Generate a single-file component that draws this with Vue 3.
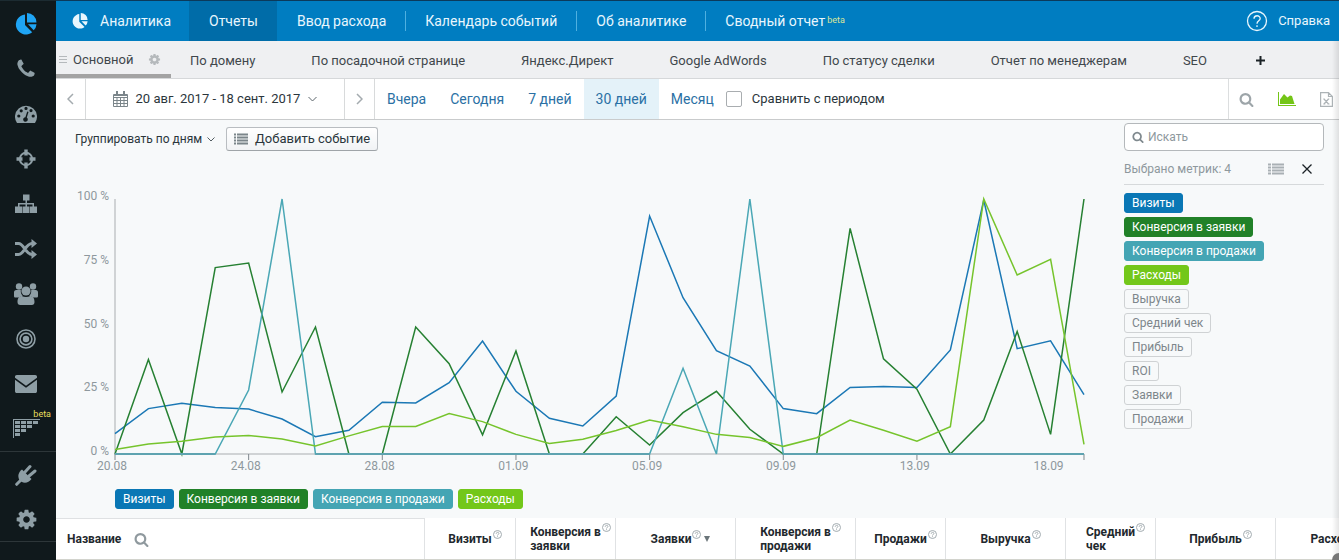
<script setup>
import { ref } from 'vue'

const cogPath = 'M1152 896q0-106-75-181t-181-75-181 75-75 181 75 181 181 75 181-75 75-181zm512-109v222q0 12-8 23t-20 13l-185 28q-19 54-39 91 35 50 107 138 10 12 10 25t-9 23q-27 37-99 108t-94 71q-12 0-26-9l-138-108q-44 23-91 38-16 136-29 186-7 28-36 28h-222q-14 0-24.5-8.5t-11.5-21.5l-28-184q-49-16-90-37l-141 107q-10 9-25 9-14 0-25-11-126-114-165-168-7-10-7-23 0-12 8-23 15-21 51-66.5t54-70.5q-27-50-41-99l-183-27q-13-2-21-12.5t-8-23.5v-222q0-12 8-23t19-13l186-28q14-46 39-92-40-57-107-138-10-12-10-24 0-10 9-23 26-36 98.5-107.5t94.5-71.5q13 0 26 10l138 107q44-23 91-38 16-136 29-186 7-28 36-28h222q14 0 24.5 8.5t11.5 21.5l28 184q49 16 90 37l142-107q9-9 24-9 13 0 25 10 129 119 165 170 7 8 7 22 0 12-8 23-15 21-51 66.5t-54 70.5q26 50 41 98l183 28q13 2 21 12.5t8 23.5z'
const searchPath = 'M1216 832q0-185-131.5-316.5t-316.5-131.5-316.5 131.5-131.5 316.5 131.5 316.5 316.5 131.5 316.5-131.5 131.5-316.5zm512 832q0 52-38 90t-90 38q-54 0-90-38l-343-342q-179 124-399 124-143 0-273.5-55.5t-225-150-150-225-55.5-273.5 55.5-273.5 150-225 225-150 273.5-55.5 273.5 55.5 225 150 150 225 55.5 273.5q0 220-124 399l343 343q37 37 37 90z'
const phonePath = 'M1600 1240q0 27-10 70.5t-21 68.5q-21 50-122 106-94 51-186 51-27 0-53-3.5t-57.5-12.5-47-14.5-55.5-20.5-49-18q-98-35-175-83-127-79-264-216t-216-264q-48-77-83-175-3-9-18-49t-20.5-55.5-14.5-47-12.5-57.5-3.5-53q0-92 51-186 56-101 106-122 25-11 68.5-21t70.5-10q14 0 21 3 18 6 53 76 11 19 30 54t35 63.5 31 53.5q3 4 17.5 25t21.5 35.5 7 28.5q0 20-28.5 50t-62 55-62 53-28.5 46q0 9 5 22.5t8.5 20.5 14 24 11.5 19q76 137 174 235t235 174q2 1 19 11.5t24 14 20.5 8.5 22.5 5q18 0 46-28.5t53-62 55-62 50-28.5q14 0 28.5 7t35.5 21.5 25 17.5q25 15 53.5 31t63.5 35 54 30q70 35 76 53 3 7 3 21z'

const menu = [
  { id: 'pie', name: 'Аналитика' },
  { id: 'phone', name: 'Звонки' },
  { id: 'gauge', name: 'Панель' },
  { id: 'aim', name: 'Цели' },
  { id: 'tree', name: 'Структура' },
  { id: 'shuffle', name: 'Сплит-тесты' },
  { id: 'users', name: 'Клиенты' },
  { id: 'target', name: 'Таргетинг' },
  { id: 'mail', name: 'Почта' },
  { id: 'grid', name: 'Когорты', beta: true },
  { id: 'plug', name: 'Интеграции', line: true },
  { id: 'cog', name: 'Настройки' },
]

const sections = [
  { name: 'Отчеты', active: true },
  { name: 'Ввод расхода' },
  { name: 'Календарь событий', line: true },
  { name: 'Об аналитике', line: true },
  { name: 'Сводный отчет', line: true, beta: true },
]

const reports = ['По домену', 'По посадочной странице', 'Яндекс.Директ', 'Google AdWords', 'По статусу сделки', 'Отчет по менеджерам', 'SEO']
const periods = ['Вчера', 'Сегодня', '7 дней', '30 дней', 'Месяц']
const period = ref('30 дней')

const series = [
  { name: 'Визиты', tone: 'blue', values: [8, 17.8, 19.9, 18.2, 17.6, 13.7, 6.8, 9.3, 20.3, 20, 28, 44.3, 24.6, 14, 11, 22.7, 93.3, 61.3, 40.5, 34.5, 17.8, 15.8, 26.1, 26.5, 26.1, 40.8, 99.6, 41.3, 44.4, 23.3] },
  { name: 'Конверсия в заявки', tone: 'green', values: [0, 37.1, 0, 73.1, 74.9, 24.3, 49.8, 0, 0, 49.8, 35.4, 7.5, 40.4, 0, 0, 14.6, 3.5, 16.2, 24.6, 9.7, 0, 0, 88.5, 37.3, 25.4, 0, 13.3, 48, 7.7, 100] },
  { name: 'Конверсия в продажи', tone: 'teal', values: [0, 0, 0, 0, 25.1, 100, 0, 0, 0, 0, 0, 0, 0, 0, 0, 0, 0, 33.6, 0, 100, 0, 0, 0, 0, 0, 0, 0, 0, 0, 0] },
  { name: 'Расходы', tone: 'lime', values: [1.8, 3.9, 5, 6.7, 7.3, 5.9, 3.1, 7.1, 10.8, 10.8, 15.9, 12.7, 7.7, 4.1, 5.8, 9.2, 13.3, 10.7, 7.7, 6.5, 3, 6.4, 13.3, 9.3, 5, 10.7, 100, 70.2, 76.3, 3.8] },
]
const idleMetrics = ['Выручка', 'Средний чек', 'Прибыль', 'ROI', 'Заявки', 'Продажи']

const days = 29
const points = (values) => values.map((v, i) => `${((i / days) * 1000).toFixed(2)},${(255 - v * 2.55).toFixed(2)}`).join(' ')
const levels = [100, 75, 50, 25, 0]
const dates = [
  { day: 0, text: '20.08' }, { day: 4, text: '24.08' }, { day: 8, text: '28.08' }, { day: 12, text: '01.09' },
  { day: 16, text: '05.09' }, { day: 20, text: '09.09' }, { day: 24, text: '13.09' }, { day: 28, text: '18.09' },
]
const ticks = [0, 4, 8, 12, 16, 20, 24, 29]

const columns = [
  { name: 'Визиты', size: 'w91' },
  { name: 'Конверсия в', second: 'заявки', size: 'w100' },
  { name: 'Заявки', size: 'w120', sorted: true },
  { name: 'Конверсия в', second: 'продажи', size: 'w120' },
  { name: 'Продажи', size: 'w90' },
  { name: 'Выручка', size: 'w120' },
  { name: 'Средний', second: 'чек', size: 'w90' },
  { name: 'Прибыль', size: 'w120' },
  { name: 'Расходы', size: 'w120' },
]
</script>

<template>
  <div class="page">
    <aside class="rail">
      <a v-for="m in menu" :key="m.id" href="#" class="rail-item" :class="{ ruled: m.line, current: m.id === 'pie' }" :aria-label="m.name">
        <svg v-if="m.id === 'pie'" width="22" height="22" viewBox="0 0 22 22">
          <path d="M10 1.500V12l7.200 7.200A10 10 0 1 1 10 1.500z" />
          <path d="M12 0a9.500 9.500 0 0 1 9.500 9.500H12z" />
          <path d="M13 11.300h8.500a9.500 9.500 0 0 1-2.800 6z" />
        </svg>
        <svg v-else-if="m.id === 'phone'" width="22" height="22" viewBox="0 0 1792 1792"><path :d="phonePath" /></svg>
        <svg v-else-if="m.id === 'gauge'" width="22" height="20" viewBox="0 0 22 20">
          <path fill-rule="evenodd" d="M2 19A11 11 0 1 1 20 19zM2.200 12a1.600 1.600 0 1 0 3.200 0a1.600 1.600 0 1 0-3.200 0zM4.600 6.800a1.600 1.600 0 1 0 3.200 0a1.600 1.600 0 1 0-3.200 0zM9.400 4.400a1.600 1.600 0 1 0 3.200 0a1.600 1.600 0 1 0-3.200 0zM14.400 6.600a1.600 1.600 0 1 0 3.200 0a1.600 1.600 0 1 0-3.200 0zM16.600 12a1.600 1.600 0 1 0 3.200 0a1.600 1.600 0 1 0-3.200 0zM12.200 7.500l-1.800 5.700a2.300 2.300 0 1 0 1.400.4l1.700-5.700z" />
        </svg>
        <svg v-else-if="m.id === 'aim'" width="20" height="20" viewBox="0 0 20 20">
          <circle cx="10" cy="10" r="6.200" class="stroke" stroke-width="2" />
          <path d="M8.300.5h3.400v6H8.300zM8.300 13.500h3.400v6H8.300zM.5 8.300h6v3.400h-6zM13.500 8.300h6v3.400h-6z" />
        </svg>
        <svg v-else-if="m.id === 'tree'" width="22" height="20" viewBox="0 0 22 20">
          <path d="M8 .5h6.500v6H12V9h7v3.500h3v6.500h-7v-6.500h2.500V10.500H12v2h2.500v6.500h-7v-6.500H10.500v-2H4.500v2H7v6.500H0v-6.500h3V9h7.500V6.500H8z" />
        </svg>
        <svg v-else-if="m.id === 'shuffle'" width="22" height="20" viewBox="0 0 22 20">
          <path class="stroke" stroke-width="3" d="M0 4.500h3.500C9 4.500 10.500 15.500 17 15.500h.5M0 15.500h3.500C9 15.500 10.500 4.500 17 4.500h.5" />
          <path d="M16.500 0l5.500 4.500-5.500 4.500zM16.500 11l5.500 4.500-5.500 4.500z" />
        </svg>
        <svg v-else-if="m.id === 'users'" width="24" height="22" viewBox="0 0 24 22">
          <circle cx="5" cy="3.500" r="3.200" /><circle cx="19" cy="3.500" r="3.200" />
          <path d="M0 13V9.500C0 8 .8 7 2.300 7h4.500c-.3 3 .6 4.600 2 5.800-1.400 0-2.600.8-3.300 1.700H1.500C.6 14.500 0 14 0 13zM24 13V9.500C24 8 23.200 7 21.700 7h-4.500c.3 3-.6 4.600-2 5.800 1.400 0 2.600.8 3.300 1.700h4c.9 0 1.500-.5 1.500-1.500z" />
          <circle cx="12" cy="8" r="4.600" />
          <path d="M3.500 19c0-3.500 1.500-6 4.300-6 2.500 1.400 5.900 1.400 8.400 0 2.800 0 4.300 2.500 4.300 6 0 2-1 3-2.700 3H6.200c-1.700 0-2.700-1-2.700-3z" />
        </svg>
        <svg v-else-if="m.id === 'target'" width="20" height="20" viewBox="0 0 20 20">
          <circle cx="10" cy="10" r="9" class="stroke" stroke-width="1.600" />
          <circle cx="10" cy="10" r="5.900" class="stroke" stroke-width="1.600" />
          <circle cx="10" cy="10" r="3.200" />
        </svg>
        <svg v-else-if="m.id === 'mail'" width="22" height="18" viewBox="0 0 22 18">
          <path d="M1.800 0h18.400C21.300 0 22 .7 22 1.800v1L11 10.800 0 2.800v-1C0 .7.700 0 1.800 0zM0 4.800l11 8 11-8v11.400c0 1.100-.7 1.800-1.800 1.800H1.800C.7 18 0 17.300 0 16.200z" />
        </svg>
        <svg v-else-if="m.id === 'grid'" width="27" height="19" viewBox="0 0 27 19">
          <path d="M0 0h27v1H1v18H0z" />
          <path d="M2 2h5v3H2zM8 2h5v3H8zM14 2h5v3h-5zM20 2h5v3h-5zM2 6h5v3H2zM8 6h5v3H8zM14 6h5v3h-5zM2 10h5v3H2zM8 10h5v3H8zM2 14h5v3H2z" />
        </svg>
        <svg v-else-if="m.id === 'plug'" width="22" height="22" viewBox="0 0 22 22">
          <path d="M7 5.500l9.500 9.500c-2.600 3.600-6.600 4.600-10 2.800L4.200 15.500C2.400 12.100 3.400 8.100 7 5.500z" />
          <path class="stroke" stroke-width="3" stroke-linecap="round" d="M10 8l5-5.500M14 12l6-5M1.700 20.300l4.500-4.500" />
        </svg>
        <svg v-else width="23" height="23" viewBox="0 0 1792 1792"><path :d="cogPath" /></svg>
        <span v-if="m.beta" class="rail-beta">beta</span>
      </a>
    </aside>

    <div class="content">
      <header class="top">
        <a href="#" class="brand">
          <svg width="16" height="16" viewBox="0 0 22 22">
            <path d="M10 1.500V12l7.200 7.200A10 10 0 1 1 10 1.500z" />
            <path d="M12 0a9.500 9.500 0 0 1 9.500 9.500H12z" />
            <path d="M13 11.300h8.500a9.500 9.500 0 0 1-2.800 6z" />
          </svg>
          Аналитика
        </a>
        <nav class="sections">
          <a v-for="s in sections" :key="s.name" href="#" :class="{ active: s.active, line: s.line }">{{ s.name }}<span v-if="s.beta" class="beta">beta</span></a>
        </nav>
        <a href="#" class="help">
          <svg width="22" height="22" viewBox="0 0 22 22">
            <circle cx="11" cy="11" r="9.500" />
            <path d="M8 8.800c0-4 6.200-4 6.200-.3 0 2.400-3.200 2.300-3.200 5.200M11 15.300v1.700" />
          </svg>
          Справка
        </a>
      </header>

      <nav class="tabs">
        <a href="#" class="tab-main">
          <svg width="8" height="7" viewBox="0 0 8 7"><path d="M0 .5h8M0 3.500h8M0 6.500h8" /></svg>
          <span>Основной</span>
          <svg class="tab-cog" width="13" height="13" viewBox="0 0 1792 1792"><path :d="cogPath" /></svg>
        </a>
        <a v-for="r in reports" :key="r" href="#" class="tab">{{ r }}</a>
        <button class="add" aria-label="Добавить отчет"><svg width="9" height="9" viewBox="0 0 9 9"><path d="M4.500 0v9M0 4.500h9" /></svg></button>
      </nav>

      <div class="bar">
        <button class="step" aria-label="Назад"><svg width="7" height="12" viewBox="0 0 7 12"><path d="M6 1L1 6l5 5" /></svg></button>
        <button class="range">
          <svg class="calendar" width="15" height="16" viewBox="0 0 15 16">
            <path d="M.5 3.500h14v12H.5zM.5 6.500h14M.5 9.500h14M.5 12.500h14M4 6v9.500M7.500 6v9.500M11 6v9.500" />
            <path d="M1 4.500h13" />
            <path class="rings" d="M4 0v4M11 0v4" />
          </svg>
          <span>20 авг. 2017 - 18 сент. 2017</span>
          <svg width="9" height="6" viewBox="0 0 9 6"><path d="M.5 1l4 4 4-4" /></svg>
        </button>
        <button class="step" aria-label="Вперед"><svg width="7" height="12" viewBox="0 0 7 12"><path d="M1 1l5 5-5 5" /></svg></button>
        <div class="periods">
          <button v-for="p in periods" :key="p" :class="{ chosen: p === period }" @click="period = p">{{ p }}</button>
        </div>
        <label class="compare"><input type="checkbox">Сравнить с периодом</label>
        <div class="tools">
          <button aria-label="Поиск"><svg width="15" height="15" viewBox="0 0 1792 1792"><path :d="searchPath" /></svg></button>
          <button aria-label="График" class="on"><svg width="18" height="14" viewBox="0 0 18 14"><path d="M0 0h1v13h17v1H0zM2 12V7.500L6 2l3.500 3.500L12 3.500l2 .5L16.500 12z" /></svg></button>
          <button aria-label="Экспорт в Excel" class="sheet"><svg width="13" height="15" viewBox="0 0 13 15"><path d="M.6.600h7.900l3.900 3.900v9.900H.6zM8.500.6v3.900h3.900M4 7l4.500 5M8.500 7L4 12M3.300 12h2M7.500 12h2M3.300 7h1.500M7.800 7h1.500" /></svg></button>
        </div>
      </div>

      <main class="body">
        <section class="report">
          <div class="controls">
            <label class="group">
              <select aria-label="Группировка"><option>Группировать по дням</option></select>
              <svg width="8" height="5" viewBox="0 0 8 5"><path d="M.5.500L4 4 7.500.5" /></svg>
            </label>
            <button class="event">
              <svg width="14" height="12" viewBox="0 0 14 12"><path d="M0 1.500h2M3 1.500h11M0 4.500h2M3 4.500h11M0 7.500h2M3 7.500h11M0 10.500h2M3 10.500h11" /></svg>
              Добавить событие
            </button>
          </div>

          <div class="chart">
            <div class="levels"><span v-for="l in levels" :key="l">{{ l }} %</span></div>
            <div class="plot">
              <svg class="canvas" viewBox="0 0 1000 255" preserveAspectRatio="none">
                <path class="axis" d="M0 0V255H1000" />
                <path v-for="t in ticks" :key="t" class="tick" :d="`M${(t / days) * 1000} 255v6`" />
                <polyline v-for="s in series" :key="s.name" :class="s.tone" :points="points(s.values)" />
                <path class="floor" d="M0 255H103.400M206.900 255H551.700M689.600 255H1000" />
              </svg>
              <div class="dates"><span v-for="d in dates" :key="d.text" :style="{ left: (d.day / days) * 100 + '%' }">{{ d.text }}</span></div>
              <div class="legend"><button v-for="s in series" :key="s.name" class="tag" :class="s.tone">{{ s.name }}</button></div>
            </div>
          </div>
        </section>

        <aside class="metrics">
          <label class="find">
            <svg width="12" height="12" viewBox="0 0 1792 1792"><path :d="searchPath" /></svg>
            <input type="text" placeholder="Искать" aria-label="Искать">
          </label>
          <div class="picked">
            <span>Выбрано метрик: 4</span>
            <button aria-label="Список"><svg class="rows" width="16" height="12" viewBox="0 0 16 12"><path d="M0 1.500h3M4 1.500h12M0 4.500h3M4 4.500h12M0 7.500h3M4 7.500h12M0 10.500h3M4 10.500h12" /></svg></button>
            <button aria-label="Сбросить"><svg class="close" width="10" height="10" viewBox="0 0 10 10"><path d="M.5.500l9 9M9.500.5l-9 9" /></svg></button>
          </div>
          <button v-for="s in series" :key="s.name" class="tag" :class="s.tone">{{ s.name }}</button>
          <button v-for="m in idleMetrics" :key="m" class="tag">{{ m }}</button>
        </aside>
      </main>

      <div class="grid">
        <table>
          <thead>
            <tr>
              <th class="name" scope="col"><span>Название</span><svg width="15" height="15" viewBox="0 0 1792 1792"><path :d="searchPath" /></svg></th>
              <th v-for="(c, i) in columns" :key="i" :class="c.size" scope="col">
                <div class="head">
                  <span>{{ c.name }}<template v-if="c.second"><br>{{ c.second }}</template></span>
                  <svg width="9" height="9" viewBox="0 0 9 9" :class="{ high: c.second }">
                    <circle cx="4.500" cy="4.500" r="4" /><path d="M3.200 3.700c0-1.800 2.700-1.800 2.700-.2 0 1-1.400 1-1.400 2M4.500 6.300v.9" />
                  </svg>
                  <i v-if="c.sorted" class="down"></i>
                </div>
              </th>
            </tr>
          </thead>
        </table>
      </div>
      <div class="edge"></div>
      <div class="knob"></div>
    </div>
  </div>
</template>

<style>
body { background: #fff; }
</style>

<style scoped>
.page {
  display: flex;
  min-height: 100vh;
  overflow: hidden;
  box-sizing: border-box;
  padding-right: 1px;
  font-family: Roboto, "Noto Sans", sans-serif;
  font-size: 14px;
  line-height: 20px;
  color: #2b363c;
}
a { color: inherit; text-decoration: none; }
button, input, select { font: inherit; color: inherit; margin: 0; padding: 0; border: 0; background: none; }
button { cursor: pointer; }
svg { display: block; flex: none; }

.rail { width: 56px; flex: none; background: #10191c; border-top: 1px solid #1c2b31; box-sizing: border-box; }
.rail-item { display: flex; position: relative; height: 45px; padding-right: 4px; align-items: center; justify-content: center; }
.rail-item svg { fill: #8e9ea5; }
.rail-item .stroke { fill: none; stroke: #8e9ea5; }
.rail-item.current svg { fill: #1fa5f5; }
.rail-item.ruled { border-top: 1px solid #2d3639; }
.rail-item:last-child { box-sizing: border-box; border-bottom: 1px solid #2d3639; }
.rail-beta { position: absolute; top: 2px; right: 5px; font-size: 9px; line-height: 12px; color: #e9dc5c; }

.content { position: relative; flex: 1; min-width: 0; display: flex; flex-direction: column; background: #f7f9fa; }
.top { display: flex; align-items: stretch; height: 40px; border-top: 1px solid #0b3a5b; background: #007dc1; color: #e8f6fd; }
.brand { display: flex; align-items: center; gap: 12px; padding: 0 18px 0 16px; }
.brand svg { fill: #e8f6fd; }
.sections { display: flex; align-items: center; }
.sections a { padding: 0 19px; border-left: 1px solid transparent; }
.sections a.active { background: #006ca8; line-height: 40px; }
.sections a.line { border-left-color: #4fb0e0; }
.beta { margin-left: 2px; font-size: 9px; vertical-align: 3px; line-height: 9px; color: #d9e59b; }
.help { display: flex; align-items: center; gap: 10px; margin-left: auto; padding-right: 9px; font-size: 13px; }
.help svg { fill: none; stroke: #e8f6fd; stroke-width: 1.300; }

.tabs { display: flex; height: 37px; border-bottom: 1px solid #d6d8da; background: #eff0f2; font-size: 13px; color: #3f474c; }
.tab-main { display: flex; align-items: center; box-sizing: border-box; width: 115px; padding: 4px 10px 0 3px; border-bottom: 4px solid #a3a3a3; }
.tab-main svg { stroke: #b5b9bc; }
.tab-main span { margin-left: 6px; }
.tab-main .tab-cog { margin-left: auto; stroke: none; fill: #b5b9bc; }
.tab { padding: 0 37px 0 19px; line-height: 39px; white-space: nowrap; }
.add { padding: 2px 12px 0; }
.add svg { stroke: #1b2226; stroke-width: 2; }

.bar { display: flex; height: 40px; border-bottom: 1px solid #c9cbcc; background: #fff; }
.step { display: flex; width: 30px; box-sizing: border-box; align-items: center; justify-content: center; border-right: 1px solid #d8dadb; }
.step svg { fill: none; stroke: #a4abaf; stroke-width: 1.500; }
.range { display: flex; align-items: center; justify-content: center; gap: 8px; box-sizing: border-box; width: 259px; border-right: 1px solid #d8dadb; font-size: 13px; }
.range svg { fill: none; stroke: #5d676c; }
.range .calendar { stroke: #7b858a; }
.range .rings { stroke-width: 2; }
.periods { display: flex; font-size: 14px; color: #2a70a4; }
.periods button { padding: 0 12px; }
.periods .chosen { background: #e4f2f9; }
.compare { display: flex; align-items: center; gap: 10px; font-size: 13px; }
.compare input { appearance: none; width: 16px; height: 16px; border: 1px solid #a9adb0; border-radius: 2px; background: #fff; }
.tools { display: flex; gap: 24px; margin-left: auto; padding: 0 6px 0 10px; border-left: 1px solid #dcdedf; }
.tools svg { fill: #9da5a9; }
.tools .on svg { fill: #74c517; }
.tools .sheet svg { fill: none; stroke: #adb3b6; stroke-width: 1.200; }

.body { display: flex; flex: 1; gap: 40px; padding: 3px 15px 8px 19px; }
.report { flex: 1; min-width: 0; }
.controls { display: flex; align-items: center; gap: 11px; padding-top: 4px; }
.group { display: flex; align-items: center; gap: 4px; }
.group select { appearance: none; font-size: 12px; }
.group svg { fill: none; stroke: #525c61; }
.event { display: flex; align-items: center; gap: 7px; height: 24px; padding: 0 7px; border: 1px solid #b9bdc1; border-bottom-color: #9fa4a8; border-radius: 3px; background: linear-gradient(#fff, #f1f3f5); font-size: 13px; }
.event svg { stroke: #7b858a; stroke-width: 2; }

.chart { display: flex; padding-top: 48px; }
.levels { display: flex; flex-direction: column; justify-content: space-between; box-sizing: border-box; width: 34px; height: 273px; margin: -12px 6px 0 0; font-size: 12px; line-height: 18px; text-align: right; color: #8e989d; white-space: nowrap; }
.plot { flex: 1; min-width: 0; }
.canvas { width: 100%; height: 255px; overflow: visible; fill: none; }
.canvas * { vector-effect: non-scaling-stroke; }
.canvas polyline { stroke-width: 1.500; }
.canvas .axis { stroke: #d0d3d5; stroke-width: 2; }
.canvas .tick { stroke: #7f888d; stroke-width: 1; }
.canvas .floor { stroke: #5ea3b0; stroke-width: 2; }
.canvas .blue { stroke: #1b78b5; }
.canvas .green { stroke: #268032; }
.canvas .teal { stroke: #4aa7b5; }
.canvas .lime { stroke: #76c42c; }
.dates { position: relative; height: 24px; margin: 0 2px 0 -3px; font-size: 12px; color: #8e989d; }
.dates span { position: absolute; top: 2px; transform: translateX(-50%); }
.legend { display: flex; gap: 5px; margin-top: 11px; }

.tag { box-sizing: border-box; height: 20px; padding: 0 7px; border: 1px solid #cfd2d4; border-radius: 3px; font-size: 12px; line-height: 18px; color: #7d868b; white-space: nowrap; }
.tag.blue { background: #0a77b5; border-color: #0a77b5; color: #fff; }
.tag.green { background: #218128; border-color: #218128; color: #fff; }
.tag.teal { background: #44a5b4; border-color: #44a5b4; color: #fff; }
.tag.lime { background: #73c71a; border-color: #73c71a; color: #fff; }

.metrics { display: flex; flex-direction: column; align-items: flex-start; gap: 4px; width: 200px; flex: none; }
.find { display: flex; align-items: center; gap: 4px; box-sizing: border-box; width: 100%; height: 28px; padding: 0 7px; border: 1px solid #b4b8bb; border-radius: 4px; background: #fff; }
.find svg { fill: #7f898e; }
.find input { flex: 1; min-width: 0; font-size: 12px; outline: none; }
.find input::placeholder { color: #8e989d; }
.picked { display: flex; align-items: center; gap: 18px; box-sizing: border-box; width: 100%; height: 30px; margin-bottom: 4px; padding: 0 12px 2px 0; border-bottom: 1px solid #d6d9db; font-size: 12px; color: #8e989d; }
.picked span { margin-right: auto; }
.rows { stroke: #a9b0b4; stroke-width: 2; }
.close { stroke: #1b2226; stroke-width: 1.300; }

.grid { overflow: hidden; background: #fff; border-bottom: 1px solid #d2d3cd; }
table { table-layout: fixed; width: 1340px; border-collapse: separate; border-spacing: 0; }
th { box-sizing: border-box; height: 41px; padding: 0 0 0 10px; border-right: 1px solid #e0e2e4; font-size: 12px; line-height: 14px; font-weight: 700; color: #1f292e; }
.name { width: 369px; padding-left: 11px; border-top: 1px solid #dfe1e3; text-align: left; }
.name span, .name svg { display: inline-block; vertical-align: middle; }
.name svg { margin-left: 13px; fill: #8f999e; }
.w90 { width: 90px; }
.w91 { width: 91px; }
.w100 { width: 100px; }
.w120 { width: 120px; }
.head { display: flex; align-items: center; justify-content: center; gap: 1px; text-align: left; white-space: nowrap; }
.head svg { margin-bottom: 8px; fill: none; stroke: #a3acb0; stroke-width: 1; }
.head svg.high { margin-bottom: 22px; }
.down { margin-left: 2px; border: 3px solid transparent; border-top: 6px solid #6b757a; border-bottom: 0; }

.edge { position: absolute; top: 41px; right: 0; bottom: 0; width: 7px; background: linear-gradient(to right, rgba(0, 0, 0, 0), rgba(0, 0, 0, 0.100)); }
.knob { position: absolute; right: 0; bottom: 0; width: 7px; height: 7px; border-top-left-radius: 7px; background: #777; }
</style>
